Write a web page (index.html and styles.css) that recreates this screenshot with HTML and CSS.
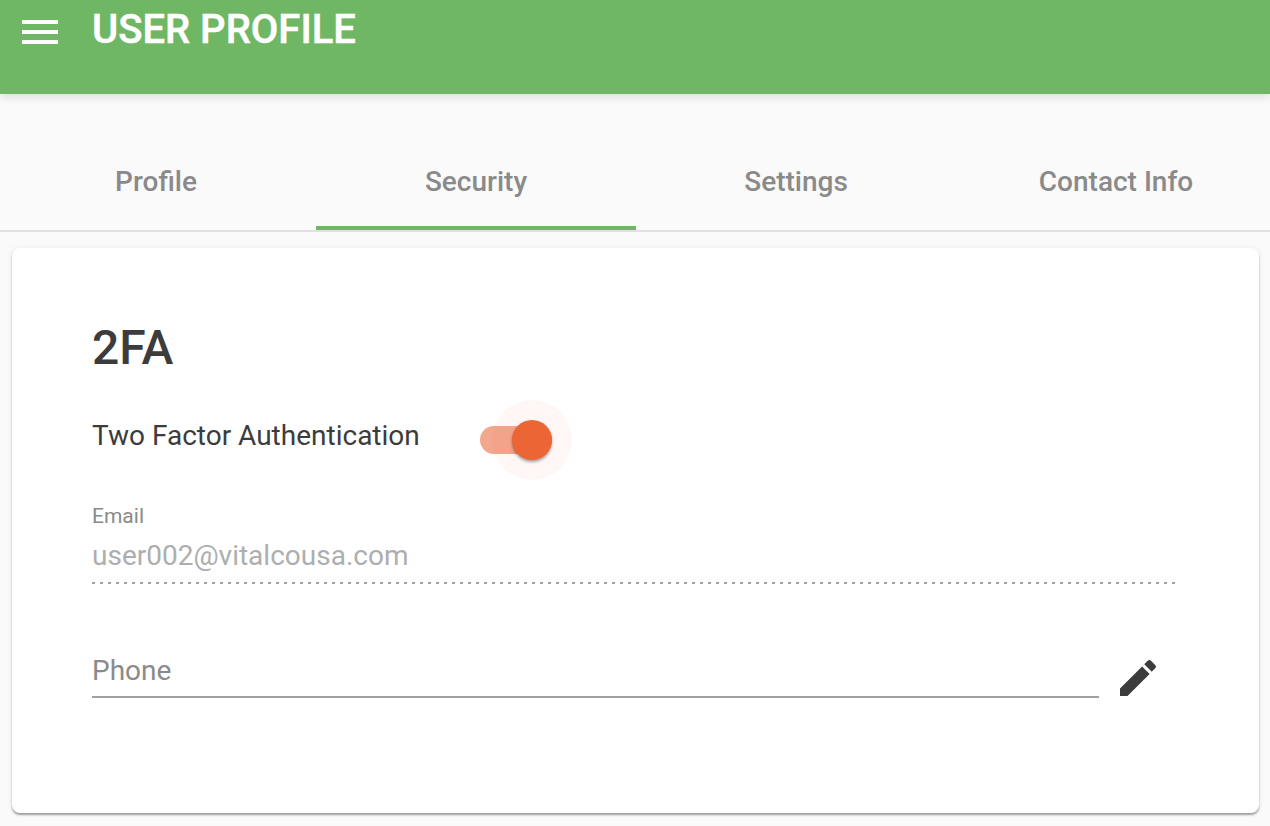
FILE: index.html
```html
<!DOCTYPE html>
<html lang="en">
<head>
    <meta charset="UTF-8">
    <title>User Profile</title>
    <link rel="stylesheet" href="styles.css">
</head>
<body>
    <header class="appbar">
        <div class="menu-icon"><span></span><span></span><span></span></div>
        <h1>USER PROFILE</h1>
    </header>

    <nav class="tabs">
        <div class="tab">Profile</div>
        <div class="tab active">Security</div>
        <div class="tab">Settings</div>
        <div class="tab">Contact Info</div>
    </nav>

    <main class="card">
        <h2>2FA</h2>
        <div class="toggle-row">
            <span class="toggle-label">Two Factor Authentication</span>
            <div class="switch">
                <div class="switch-track"></div>
                <div class="switch-halo"></div>
                <div class="switch-thumb"></div>
            </div>
        </div>
        <div class="field-disabled">
            <label>Email</label>
            <div class="field-value">user002@vitalcousa.com</div>
        </div>
        <div class="phone-row">
            <div class="field-phone">Phone</div>
            <div class="edit-btn">
                <svg viewBox="0 0 24 24" width="48" height="48">
                    <path fill="#3c3c3c" d="M3 17.25V21h3.75L17.81 9.94l-3.75-3.75L3 17.25zM20.71 7.04c.39-.39.39-1.02 0-1.41l-2.34-2.34c-.39-.39-1.02-.39-1.41 0l-1.83 1.83 3.75 3.75 1.83-1.83z"/>
                </svg>
            </div>
        </div>
    </main>
</body>
</html>
```

FILE: styles.css
```css
html, body {
    margin: 0;
    height: 826px;
    overflow: hidden;
}
body {
    font-family: Roboto, sans-serif;
    background: #fafafa;
    color: #3c3c3c;
}
.appbar {
    height: 94px;
    box-sizing: border-box;
    background: #6fb764;
    box-shadow: 0 2px 10px rgba(0,0,0,0.14);
    display: flex;
    align-items: flex-start;
    color: white;
    position: relative;
}
.appbar h1 {
    margin: 7px 0 0 34px;
    font-size: 40px;
    line-height: 46px;
    font-weight: 500;
    -webkit-text-stroke: 0.5px white;
}
.menu-icon {
    margin: 20px 0 0 22px;
    width: 36px;
    height: 24px;
    display: flex;
    flex-direction: column;
    justify-content: space-between;
}
.menu-icon span {
    display: block;
    height: 4px;
    background: white;
}
.tabs {
    display: flex;
    height: 136px;
    border-bottom: 2px solid #e0e0e0;
    overflow: hidden;
}
.tab {
    flex: none;
    width: 320px;
    box-sizing: border-box;
    padding-top: 70px;
    text-align: center;
    font-size: 28px;
    line-height: 36px;
    font-weight: 500;
    color: #8a8a8a;
}
.tab:first-child {
    margin-left: -4px;
}
.tab.active {
    border-bottom: 4px solid #6fb764;
}
.card {
    margin: 16px 11px 0 12px;
    height: 565px;
    box-sizing: border-box;
    padding: 70px 84px 0 80px;
    background: white;
    border-radius: 8px;
    box-shadow: 0 2px 2px rgba(0,0,0,0.35), 0 0 6px rgba(0,0,0,0.06);
}
.card h2 {
    margin: 0;
    font-size: 48px;
    line-height: 60px;
    font-weight: 500;
}
.toggle-row {
    margin-top: 42px;
    display: flex;
    align-items: center;
    height: 40px;
}
.toggle-label {
    font-size: 28px;
    line-height: 36px;
    width: 388px;
    margin-top: -8px;
}
.switch {
    position: relative;
    width: 72px;
    height: 40px;
}
.switch-track {
    position: absolute;
    left: 0;
    top: 6px;
    width: 72px;
    height: 28px;
    border-radius: 14px;
    background: #f4a78f;
}
.switch-halo {
    position: absolute;
    left: 12px;
    top: -20px;
    width: 80px;
    height: 80px;
    border-radius: 50%;
    background: rgba(236, 101, 53, 0.05);
}
.switch-thumb {
    position: absolute;
    left: 32px;
    top: 0;
    width: 40px;
    height: 40px;
    border-radius: 50%;
    background: #ec6535;
    box-shadow: 0 2px 3px rgba(0,0,0,0.35);
}
.field-disabled {
    margin-top: 38px;
    height: 86px;
    box-sizing: border-box;
    background: repeating-linear-gradient(90deg, #a0a0a0 0, #a0a0a0 3px, transparent 3px, transparent 8px) left bottom / 100% 2px no-repeat;
}
.field-disabled label {
    display: block;
    margin-bottom: 4px;
    font-size: 21px;
    line-height: 36px;
    color: #8a8a8a;
}
.field-value {
    font-size: 28px;
    line-height: 36px;
    color: #aeaeae;
}
.phone-row {
    margin-top: 48px;
    display: flex;
    align-items: flex-start;
}
.field-phone {
    width: 1007px;
    height: 66px;
    box-sizing: border-box;
    padding-top: 21px;
    border-bottom: 2px solid #a0a0a0;
    font-size: 28px;
    line-height: 36px;
    color: #8a8a8a;
}
.edit-btn {
    margin: 22px 0 0 15px;
    width: 48px;
    height: 42px;
    overflow: hidden;
}
```
